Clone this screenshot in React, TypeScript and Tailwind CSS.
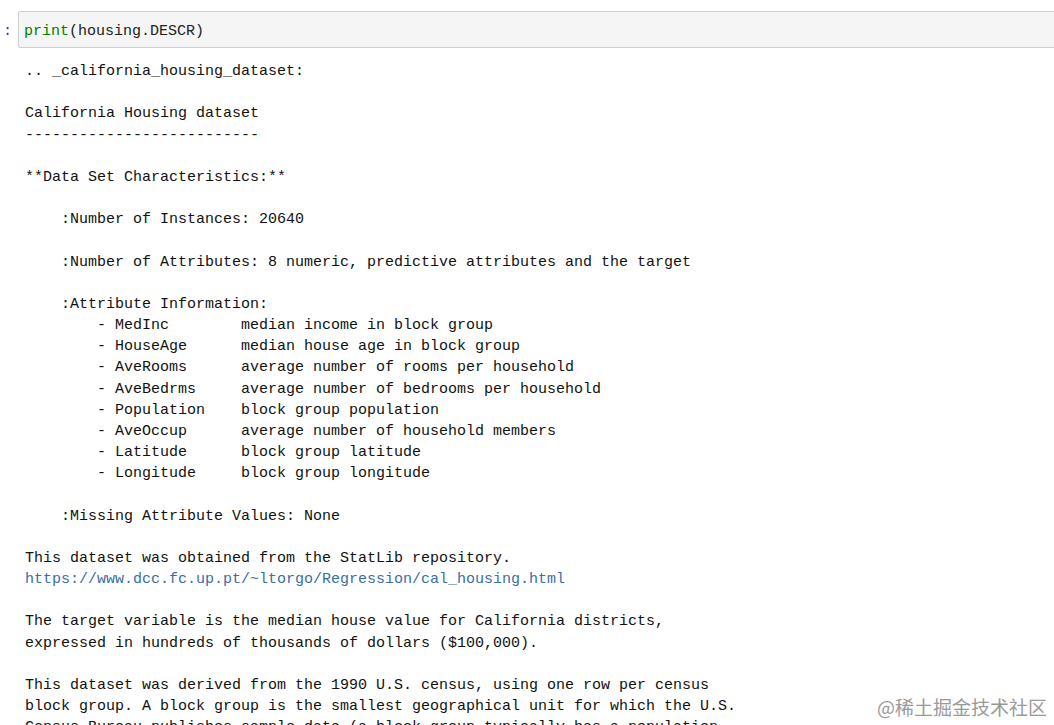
import React from "react";

const lines1 = `.. _california_housing_dataset:

California Housing dataset
--------------------------

**Data Set Characteristics:**

    :Number of Instances: 20640

    :Number of Attributes: 8 numeric, predictive attributes and the target

    :Attribute Information:
        - MedInc        median income in block group
        - HouseAge      median house age in block group
        - AveRooms      average number of rooms per household
        - AveBedrms     average number of bedrooms per household
        - Population    block group population
        - AveOccup      average number of household members
        - Latitude      block group latitude
        - Longitude     block group longitude

    :Missing Attribute Values: None

This dataset was obtained from the StatLib repository.
`;

const lines2 = `

The target variable is the median house value for California districts,
expressed in hundreds of thousands of dollars ($100,000).

This dataset was derived from the 1990 U.S. census, using one row per census
block group. A block group is the smallest geographical unit for which the U.S.
Census Bureau publishes sample data (a block group typically has a population
of 600 to 3,000 people).`;

export default function App() {
  return (
    <div className="relative w-[1054px] h-[725px] overflow-hidden bg-white text-black">
      <div className="flex items-start pt-[11px]">
        <div className="w-[18px] shrink-0 h-[37px] flex items-center pt-[5px] pl-[3px] text-[#303f9f] font-['Liberation_Mono',monospace] text-[15px]">:</div>
        <div className="w-[1050px] shrink-0 h-[37px] border border-[#cfcfcf] bg-[#f5f5f5] rounded-[2px] flex items-center pt-[5px] pl-[5px] font-['Liberation_Mono',monospace] text-[15px] text-[#222]">
          <span className="text-[#008000]">print</span>
          <span>(housing.DESCR)</span>
        </div>
      </div>
      <pre className="mt-[13px] pl-[25px] font-['Liberation_Mono',monospace] text-[15px] leading-[21.17px] text-[#111] whitespace-pre">
        {lines1}
        <span className="text-[#3a6ea5]">https://www.dcc.fc.up.pt/~ltorgo/Regression/cal_housing.html</span>
        {lines2}
      </pre>
      <div className="absolute right-[7px] bottom-[6px] text-[19px] leading-[24px] text-[#9a9a9a] font-['Noto_Sans_CJK_SC',sans-serif]">
        @稀土掘金技术社区
      </div>
    </div>
  );
}
